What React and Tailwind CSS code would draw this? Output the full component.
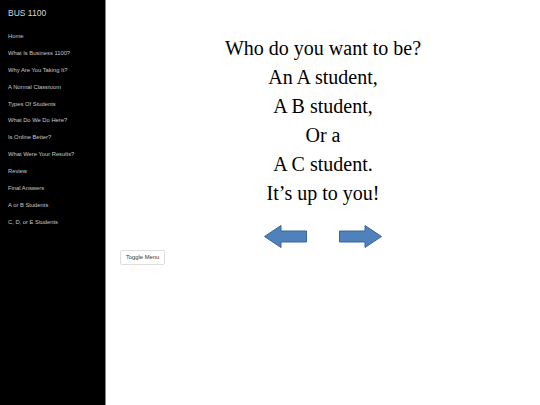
import React from "react";

const links = [
  "Home",
  "What Is Business 1100?",
  "Why Are You Taking It?",
  "A Normal Classroom",
  "Types Of Students",
  "What Do We Do Here?",
  "Is Online Better?",
  "What Were Your Results?",
  "Review",
  "Final Answers",
  "A or B Students",
  "C, D, or E Students",
];

const lines = [
  "Who do you want to be?",
  "An A student,",
  "A B student,",
  "Or a",
  "A C student.",
  "It\u2019s up to you!",
];

function Arrow({ flip }) {
  return (
    <svg width="43" height="23" viewBox="0 0 43 23" className={flip ? "-scale-x-100" : ""}>
      <polygon
        points="0.5,11.5 17,0.5 17,6 42.5,6 42.5,17 17,17 17,22.5"
        fill="#4f81bd"
        stroke="#3a6597"
        strokeWidth="1"
      />
    </svg>
  );
}

export default function App() {
  return (
    <div className="flex w-[540px] h-[405px] bg-white font-['Liberation_Sans',Arial,sans-serif]">
      <div className="w-[106px] shrink-0 bg-black border-r border-[#888] pl-[8px] pt-[7px]">
        <p className="text-[8.5px] text-[#d8d8d8] leading-[12px]">BUS 1100</p>
        <ul className="mt-[13px]">
          {links.map((l) => (
            <li key={l} className="text-[5.8px] text-[#c8c8c8] leading-[8px] mb-[8.9px] whitespace-nowrap">
              {l}
            </li>
          ))}
        </ul>
      </div>
      <div className="flex-1 flex flex-col">
        <div className="flex flex-col items-center pt-[34px] font-['Liberation_Serif','Times_New_Roman',serif] text-[20px] text-black leading-[29px]">
          {lines.map((l) => (
            <p key={l}>{l}</p>
          ))}
          <div className="flex gap-[32px] mt-[17px]">
            <Arrow />
            <Arrow flip />
          </div>
        </div>
        <div className="pl-[14px] mt-[-6px]">
          <button className="h-[15px] px-[5px] border border-[#ddd] rounded-[2px] bg-white text-[5.8px] text-[#333] leading-none">
            Toggle Menu
          </button>
        </div>
      </div>
    </div>
  );
}
